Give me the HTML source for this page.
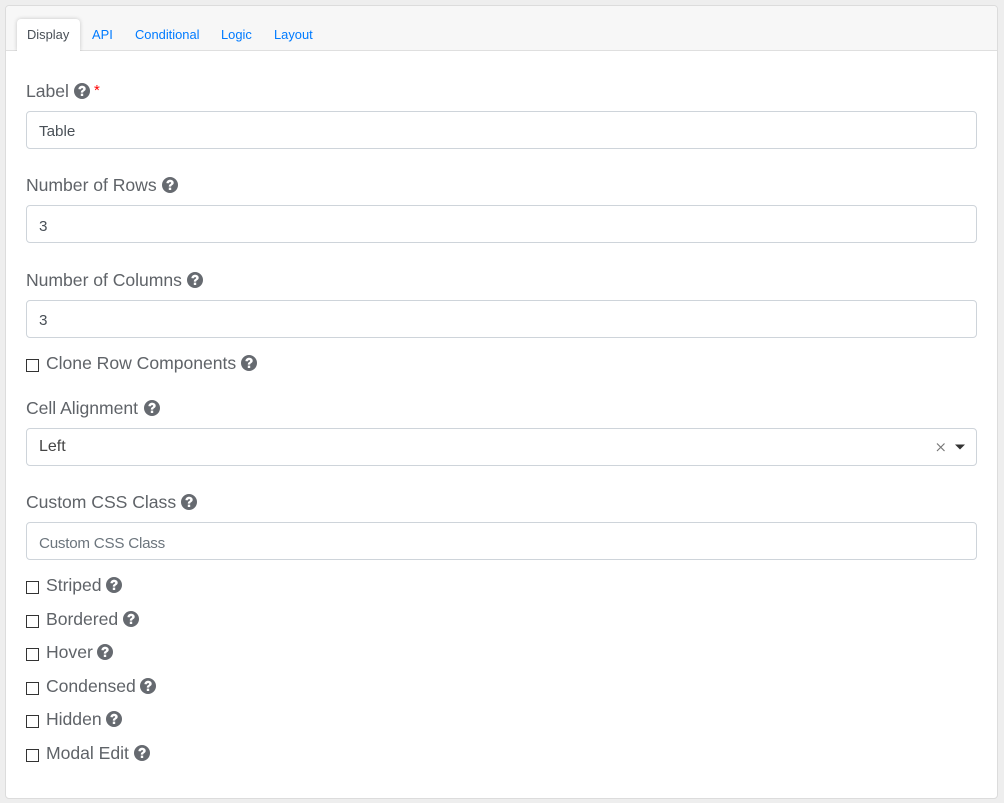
<!DOCTYPE html>
<html><head><meta charset="utf-8">
<style>
*{box-sizing:border-box}
html,body{margin:0;padding:0;width:1004px;height:803px;overflow:hidden;background:#eeeeee;font-family:"Liberation Sans",sans-serif}
.card{position:absolute;left:5px;top:5px;width:993px;height:794px;background:#fff;border:1px solid #dcdcdc;border-radius:4px}
.head{position:absolute;left:6px;top:6px;width:991px;height:45px;background:#f7f7f7;border-bottom:1px solid #dfdfdf;border-radius:4px 4px 0 0}
.tab{position:absolute;top:27px;font-size:12.9px;line-height:15px;color:#007bff;white-space:nowrap}
.active{position:absolute;left:17px;top:19px;width:63px;height:32px;background:#fff;border-radius:4px 4px 0 0;box-shadow:0 0 4px rgba(0,0,0,.2)}
.mask{position:absolute;left:10px;top:51px;width:80px;height:6px;background:#fff}
.lab{position:absolute;font-size:17.6px;letter-spacing:-.03px;line-height:20px;color:#5f6368;white-space:nowrap}
.ic{position:absolute;width:16px;height:16px}
.inp{position:absolute;left:26px;width:951px;height:38px;border:1px solid #ced4da;border-radius:4px;background:#fff}
.val{position:absolute;left:39px;font-size:15.2px;line-height:20px;color:#495057;white-space:nowrap}
.cb{position:absolute;left:26px;width:13px;height:13px;border:1px solid #333;background:#fff}
.star{position:absolute;left:94px;top:83px;color:#f00;font-size:15px;line-height:15px}
</style></head><body>
<svg width="0" height="0" style="position:absolute"><defs><symbol id="q" viewBox="0 0 16 16"><circle cx="8" cy="8" r="8" fill="#666a70"/><path d="M4.4 6.1C4.6 4 6.1 2.8 8.1 2.8c2.1 0 3.6 1.2 3.6 3 0 1.2-.7 1.9-1.6 2.5-.7.4-.9.7-.9 1.3H6.8c0-1.4.5-2 1.4-2.6.7-.4 1-.7 1-1.1 0-.5-.5-.8-1.1-.8-.7 0-1.2.4-1.4 1.3z" fill="#fff"/><rect x="6.8" y="10.6" width="2.4" height="2.4" fill="#fff"/></symbol></defs></svg>
<div class="card"></div><div class="head"></div>
<div class="active"></div><div class="mask"></div>
<div class="tab" style="left:27px;color:#495057">Display</div>
<div class="tab" style="left:92px">API</div>
<div class="tab" style="left:135px">Conditional</div>
<div class="tab" style="left:221px">Logic</div>
<div class="tab" style="left:274px">Layout</div>

<div class="lab" style="left:26px;top:81px">Label</div>
<svg class="ic" style="left:74px;top:83px"><use href="#q"/></svg><div class="star">*</div>
<div class="inp" style="top:111px"></div><div class="val" style="top:122px">Table</div>

<div class="lab" style="left:26px;top:175px">Number of Rows</div>
<svg class="ic" style="left:162px;top:177px"><use href="#q"/></svg>
<div class="inp" style="top:205px"></div><div class="val" style="top:217px">3</div>

<div class="lab" style="left:26px;top:270px">Number of Columns</div>
<svg class="ic" style="left:187px;top:272px"><use href="#q"/></svg>
<div class="inp" style="top:300px"></div><div class="val" style="top:311px">3</div>

<div class="cb" style="top:359px"></div>
<div class="lab" style="left:46px;top:353px">Clone Row Components</div>
<svg class="ic" style="left:241px;top:355px"><use href="#q"/></svg>

<div class="lab" style="left:26px;top:398px">Cell Alignment</div>
<svg class="ic" style="left:144px;top:400px"><use href="#q"/></svg>
<div class="inp" style="top:428px"></div><div class="val" style="top:437px;font-size:16px;color:#444">Left</div>
<svg style="position:absolute;left:936px;top:442px" width="10" height="10"><path d="M1 1.5L8.5 9M8.5 1.5L1 9" stroke="#777" stroke-width="1.2" fill="none"/></svg>
<svg style="position:absolute;left:954px;top:444px" width="12" height="7"><path d="M1 .5H11L6 5.5z" fill="#333"/></svg>

<div class="lab" style="left:26px;top:492px">Custom CSS Class</div>
<svg class="ic" style="left:181px;top:494px"><use href="#q"/></svg>
<div class="inp" style="top:522px"></div><div class="val" style="top:534px;color:#6c757d;letter-spacing:-.25px">Custom CSS Class</div>

<div class="cb" style="top:581px"></div><div class="lab" style="left:46px;top:575px">Striped</div>
<svg class="ic" style="left:106px;top:577px"><use href="#q"/></svg>
<div class="cb" style="top:615px"></div><div class="lab" style="left:46px;top:609px">Bordered</div>
<svg class="ic" style="left:123px;top:611px"><use href="#q"/></svg>
<div class="cb" style="top:648px"></div><div class="lab" style="left:46px;top:642px">Hover</div>
<svg class="ic" style="left:97px;top:644px"><use href="#q"/></svg>
<div class="cb" style="top:682px"></div><div class="lab" style="left:46px;top:676px">Condensed</div>
<svg class="ic" style="left:140px;top:678px"><use href="#q"/></svg>
<div class="cb" style="top:715px"></div><div class="lab" style="left:46px;top:709px">Hidden</div>
<svg class="ic" style="left:106px;top:711px"><use href="#q"/></svg>
<div class="cb" style="top:749px"></div><div class="lab" style="left:46px;top:743px">Modal Edit</div>
<svg class="ic" style="left:134px;top:745px"><use href="#q"/></svg>
</body></html>
